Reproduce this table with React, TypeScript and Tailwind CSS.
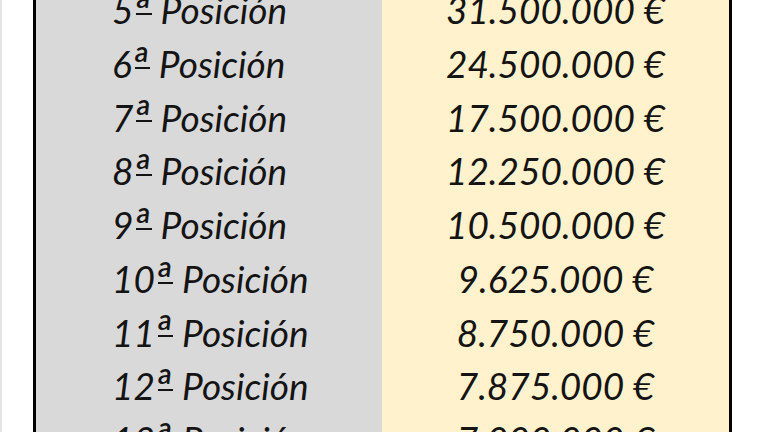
const rows = [
  ["5", "31.500.000 €"],
  ["6", "24.500.000 €"],
  ["7", "17.500.000 €"],
  ["8", "12.250.000 €"],
  ["9", "10.500.000 €"],
  ["10", "9.625.000 €"],
  ["11", "8.750.000 €"],
  ["12", "7.875.000 €"],
  ["13", "7.000.000 €"],
];

export default function App() {
  return (
    <div className="flex h-[432px] w-[768px] overflow-hidden bg-white">
      <div className="w-[2px] bg-[#e4e4e4]" />
      <div className="ml-[31px] flex flex-col self-start -mt-[17px] border-x-[3px] border-black font-['Lato',sans-serif] text-[37px] italic text-[#141414]">
        {rows.map(([pos, amount]) => (
          <div key={pos} className="flex h-[53.75px]">
            <div className="flex w-[346px] items-center bg-[#d9d9d9] pl-[76px] whitespace-pre">
              {pos}
              <span className="relative inline-block pr-[2px] text-[48px] leading-none after:absolute after:bottom-[19px] after:left-[3px] after:right-0 after:h-[2px] after:bg-current after:content-['']">
                ª
              </span>
              {" Posición"}
            </div>
            <div className="flex w-[347px] items-center justify-center bg-[#fff2cc]">{amount}</div>
          </div>
        ))}
      </div>
    </div>
  );
}
